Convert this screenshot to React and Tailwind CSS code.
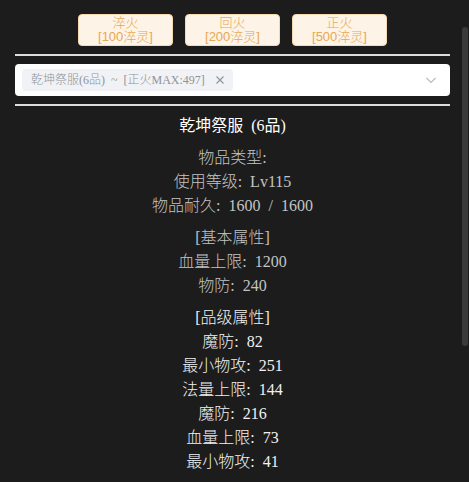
import React from "react";

const SERIF = { fontFamily: '"Liberation Serif", "Noto Sans CJK SC", serif' };
const SANS = { fontFamily: '"Liberation Sans", "Noto Sans CJK SC", sans-serif' };

const buttons = [
  ["淬火", "[100淬灵]"],
  ["回火", "[200淬灵]"],
  ["正火", "[500淬灵]"],
];

const group1 = ["物品类型:", "使用等级: Lv115", "物品耐久: 1600 / 1600"];
const group2 = ["[基本属性]", "血量上限: 1200", "物防: 240"];
const group3 = [
  "[品级属性]",
  "魔防: 82",
  "最小物攻: 251",
  "法量上限: 144",
  "魔防: 216",
  "血量上限: 73",
  "最小物攻: 41",
];

function Group({ lines, color }) {
  return (
    <div className={`flex flex-col items-center ${color}`}>
      {lines.map((l, i) => (
        <div key={i} className="h-[24px] leading-[24px] text-[16px] font-light whitespace-pre [word-spacing:4px]">
          {l}
        </div>
      ))}
    </div>
  );
}

export default function App() {
  return (
    <div className="relative w-[469px] h-[482px] overflow-hidden bg-[#1c1c1c]" style={SERIF}>
      <div className="w-[465px] px-[15px] pt-[14px] flex flex-col gap-2">
        <div className="flex justify-center gap-[12px]" style={SANS}>
          {buttons.map(([a, b]) => (
            <div
              key={a}
              className="w-[95px] h-[32px] rounded-[4px] border border-[#f5dab1] bg-[#fdf3e6] text-[#e8a752] text-[13px] leading-[14px] font-light flex flex-col items-center justify-center"
            >
              <span>{a}</span>
              <span>{b}</span>
            </div>
          ))}
        </div>
        <div className="h-[2px] bg-[#dcdcdc]" />
        <div className="h-[32px] rounded-[4px] bg-white flex items-center pl-[7px] pr-[12px]">
          <div className="h-[22px] rounded-[4px] bg-[#f0f2f5] flex items-center pl-[9px] pr-[8px] gap-[10px] text-[12px] text-[#909399] font-light whitespace-pre [word-spacing:3px]">
            <span>乾坤祭服(6品) ~ [正火MAX:497]</span>
            <svg width="10" height="10" viewBox="0 0 10 10" fill="none" stroke="#909399" strokeWidth="1.1">
              <path d="M1.5 1.5 L8.5 8.5 M8.5 1.5 L1.5 8.5" />
            </svg>
          </div>
          <div className="flex-1" />
          <svg width="14" height="14" viewBox="0 0 14 14" fill="none" stroke="#b8bbc2" strokeWidth="1.2">
            <path d="M2.5 5 L7 9.5 L11.5 5" />
          </svg>
        </div>
        <div className="h-[2px] bg-[#dcdcdc]" />
        <div className="flex flex-col items-center">
          <div className="h-[24px] leading-[24px] text-[16px] text-white whitespace-pre [word-spacing:4px]">
            乾坤祭服 (6品)
          </div>
        </div>
        <Group lines={group1} color="text-[#c4c4c4]" />
        <Group lines={group2} color="text-[#c4c4c4]" />
        <Group lines={group3} color="text-[#f2f2f2]" />
      </div>
      <div className="absolute right-[1px] top-[27px] w-[6px] h-[319px] rounded-full bg-[#3a3a3a]" />
    </div>
  );
}
